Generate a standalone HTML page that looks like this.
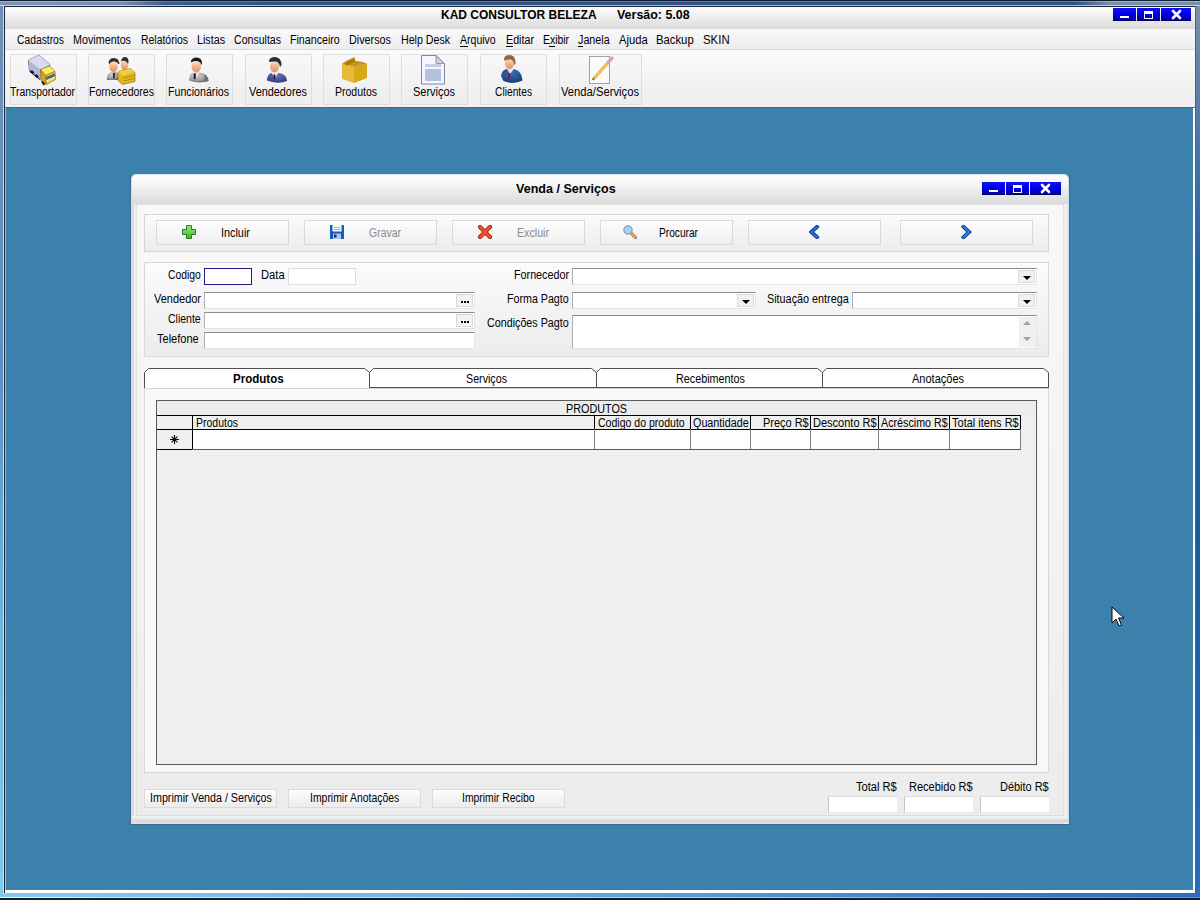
<!DOCTYPE html>
<html><head><meta charset="utf-8"><style>
html,body{margin:0;padding:0;width:1200px;height:900px;overflow:hidden;background:#0f1d2d}
body>div,body>svg{position:absolute}
body>div{box-sizing:border-box}
.t{white-space:nowrap;font-family:"Liberation Sans",sans-serif;line-height:normal}
</style></head><body>
<div style="left:0px;top:0px;width:1200px;height:900px;background:#0f1d2d"></div>
<div style="left:0px;top:1px;width:1200px;height:5px;background:linear-gradient(to right,#7c92b2 0px,#7890b0 120px,#3a5c92 165px,#2c5088 300px,#2c5088 1075px,#7890b0 1110px,#7890b0 1200px)"></div>
<div style="left:0px;top:1px;width:1200px;height:1px;background:linear-gradient(to right,#a0b4cc 0px,#a0b4cc 120px,#5a7cac 165px,#5a7cac 1075px,#a0b4cc 1110px)"></div>
<div style="left:0px;top:5px;width:1200px;height:1px;background:linear-gradient(to right,#c0d4e8 0px,#c0d4e8 120px,#a0c0e8 165px,#a0c0e8 1075px,#c0d4e8 1110px)"></div>
<div style="left:0px;top:6px;width:3px;height:888px;background:linear-gradient(to bottom,#7090b8 0%,#5c90c4 40%,#68b8e0 70%,#80c8f0 100%)"></div>
<div style="left:1196px;top:6px;width:4px;height:888px;background:linear-gradient(to bottom,#7890a8 0%,#2060a8 30%,#1a5aa0 60%,#2a6cc0 100%)"></div>
<div style="left:0px;top:893px;width:1200px;height:5px;background:linear-gradient(to right,#88c8ec 0%,#70b0e0 40%,#3a80c8 80%,#2a6cc0 100%)"></div>
<div style="left:0px;top:897px;width:1200px;height:1px;background:linear-gradient(to right,#e0f4ff 0%,#a8d0f0 60%,#5090d0 100%)"></div>
<div style="left:3px;top:5px;width:1px;height:889px;background:#c0e0f8"></div>
<div style="left:4px;top:6px;width:1192px;height:1px;background:#1c2838"></div>
<div style="left:4px;top:6px;width:1px;height:887px;background:#1c2838"></div>
<div style="left:1195px;top:6px;width:1px;height:887px;background:#4a6080"></div>
<div style="left:5px;top:7px;width:1190px;height:886px;background:#f0f0f0"></div>
<div style="left:5px;top:7px;width:1190px;height:22px;background:linear-gradient(to bottom,#fdfdfd 0%,#f0f0f0 40%,#dadada 100%)"></div>
<div style="left:1113px;top:8px;width:23px;height:13px;background:linear-gradient(to bottom,#1010ff 0%,#0000e8 50%,#0000a8 100%);border-bottom:1px solid #000060;box-sizing:border-box"></div>
<div style="left:1137px;top:8px;width:23px;height:13px;background:linear-gradient(to bottom,#1010ff 0%,#0000e8 50%,#0000a8 100%);border-bottom:1px solid #000060;box-sizing:border-box"></div>
<div style="left:1161px;top:8px;width:30px;height:13px;background:linear-gradient(to bottom,#1010ff 0%,#0000e8 50%,#0000a8 100%);border-bottom:1px solid #000060;box-sizing:border-box"></div>
<div style="left:1120px;top:16px;width:9px;height:2px;background:#fff"></div>
<div style="left:1144px;top:11px;width:9px;height:8px;border:1px solid #fff;border-top-width:3px;box-sizing:border-box"></div>
<svg style="position:absolute;left:1171px;top:9px" width="11" height="11" viewBox="0 0 11 11"><path d="M2 2L9 9M9 2L2 9" stroke="#fff" stroke-width="2.6" stroke-linecap="round"/></svg>
<div class="t" style="left:441.00px;top:8px;font-size:12px;color:#000;font-weight:bold;">KAD CONSULTOR BELEZA</div>
<div class="t" style="left:617.00px;top:8px;font-size:12px;color:#000;font-weight:bold;transform:scaleX(1.0373);transform-origin:0 0;">Versão: 5.08</div>
<div style="left:5px;top:29px;width:1190px;height:20px;background:linear-gradient(to bottom,#f9f9f9,#ededed)"></div>
<div style="left:5px;top:49px;width:1190px;height:1px;background:#d9d9d9"></div>
<div style="left:5px;top:50px;width:1190px;height:1px;background:#fbfbfb"></div>
<div class="t" style="left:17.00px;top:33px;font-size:12px;color:#000;transform:scaleX(0.8594);transform-origin:0 0;">Cadastros</div>
<div class="t" style="left:73.00px;top:33px;font-size:12px;color:#000;transform:scaleX(0.8966);transform-origin:0 0;">Movimentos</div>
<div class="t" style="left:141.00px;top:33px;font-size:12px;color:#000;transform:scaleX(0.8700);transform-origin:0 0;">Relatórios</div>
<div class="t" style="left:197.00px;top:33px;font-size:12px;color:#000;transform:scaleX(0.8932);transform-origin:0 0;">Listas</div>
<div class="t" style="left:234.00px;top:33px;font-size:12px;color:#000;transform:scaleX(0.8808);transform-origin:0 0;">Consultas</div>
<div class="t" style="left:290.00px;top:33px;font-size:12px;color:#000;transform:scaleX(0.8873);transform-origin:0 0;">Financeiro</div>
<div class="t" style="left:349.00px;top:33px;font-size:12px;color:#000;transform:scaleX(0.8998);transform-origin:0 0;">Diversos</div>
<div class="t" style="left:401.00px;top:33px;font-size:12px;color:#000;transform:scaleX(0.8873);transform-origin:0 0;">Help Desk</div>
<div class="t" style="left:460.00px;top:33px;font-size:12px;color:#000;transform:scaleX(0.8778);transform-origin:0 0;">Arquivo</div>
<div class="t" style="left:506.00px;top:33px;font-size:12px;color:#000;transform:scaleX(0.8931);transform-origin:0 0;">Editar</div>
<div class="t" style="left:543.00px;top:33px;font-size:12px;color:#000;transform:scaleX(0.8664);transform-origin:0 0;">Exibir</div>
<div class="t" style="left:578.00px;top:33px;font-size:12px;color:#000;transform:scaleX(0.8967);transform-origin:0 0;">Janela</div>
<div class="t" style="left:619.00px;top:33px;font-size:12px;color:#000;transform:scaleX(0.9350);transform-origin:0 0;">Ajuda</div>
<div class="t" style="left:656.00px;top:33px;font-size:12px;color:#000;transform:scaleX(0.9417);transform-origin:0 0;">Backup</div>
<div class="t" style="left:703.00px;top:33px;font-size:12px;color:#000;transform:scaleX(0.9509);transform-origin:0 0;">SKIN</div>
<div style="left:460px;top:46px;width:8px;height:1px;background:#000"></div>
<div style="left:506px;top:46px;width:7px;height:1px;background:#000"></div>
<div style="left:549px;top:46px;width:6px;height:1px;background:#000"></div>
<div style="left:578px;top:46px;width:5px;height:1px;background:#000"></div>
<div style="left:5px;top:51px;width:1190px;height:56px;background:linear-gradient(to bottom,#fbfbfb 0%,#f2f2f2 60%,#eeeeee 92%,#f6f0f0 94%,#f6f0f0 100%)"></div>
<div style="left:10px;top:54px;width:67px;height:51px;border:1px solid #dedede;background:linear-gradient(to bottom,#f8f8f8,#ededed);box-sizing:border-box"></div>
<div class="t" style="left:10.00px;top:85px;font-size:12px;color:#000;transform:scaleX(0.8675);transform-origin:0 0;">Transportador</div>
<div style="left:88px;top:54px;width:67px;height:51px;border:1px solid #dedede;background:linear-gradient(to bottom,#f8f8f8,#ededed);box-sizing:border-box"></div>
<div class="t" style="left:89.00px;top:85px;font-size:12px;color:#000;transform:scaleX(0.8779);transform-origin:0 0;">Fornecedores</div>
<div style="left:166px;top:54px;width:67px;height:51px;border:1px solid #dedede;background:linear-gradient(to bottom,#f8f8f8,#ededed);box-sizing:border-box"></div>
<div class="t" style="left:168.00px;top:85px;font-size:12px;color:#000;transform:scaleX(0.8879);transform-origin:0 0;">Funcionários</div>
<div style="left:245px;top:54px;width:67px;height:51px;border:1px solid #dedede;background:linear-gradient(to bottom,#f8f8f8,#ededed);box-sizing:border-box"></div>
<div class="t" style="left:249.00px;top:85px;font-size:12px;color:#000;transform:scaleX(0.9055);transform-origin:0 0;">Vendedores</div>
<div style="left:323px;top:54px;width:67px;height:51px;border:1px solid #dedede;background:linear-gradient(to bottom,#f8f8f8,#ededed);box-sizing:border-box"></div>
<div class="t" style="left:335.00px;top:85px;font-size:12px;color:#000;transform:scaleX(0.8745);transform-origin:0 0;">Produtos</div>
<div style="left:401px;top:54px;width:67px;height:51px;border:1px solid #dedede;background:linear-gradient(to bottom,#f8f8f8,#ededed);box-sizing:border-box"></div>
<div class="t" style="left:413.00px;top:85px;font-size:12px;color:#000;transform:scaleX(0.9128);transform-origin:0 0;">Serviços</div>
<div style="left:480px;top:54px;width:67px;height:51px;border:1px solid #dedede;background:linear-gradient(to bottom,#f8f8f8,#ededed);box-sizing:border-box"></div>
<div class="t" style="left:495.00px;top:85px;font-size:12px;color:#000;transform:scaleX(0.8534);transform-origin:0 0;">Clientes</div>
<div style="left:559px;top:54px;width:83px;height:51px;border:1px solid #dedede;background:linear-gradient(to bottom,#f8f8f8,#ededed);box-sizing:border-box"></div>
<div class="t" style="left:561.00px;top:85px;font-size:12px;color:#000;transform:scaleX(0.9354);transform-origin:0 0;">Venda/Serviços</div>
<div style="left:5px;top:107px;width:1190px;height:1px;background:#56626e"></div>
<div style="left:5px;top:108px;width:1px;height:782px;background:#a8b4c0"></div>
<div style="left:6px;top:108px;width:1187px;height:782px;background:#3c80ac"></div>
<div style="left:1193px;top:108px;width:2px;height:785px;background:#fff"></div>
<div style="left:5px;top:890px;width:1190px;height:3px;background:#fff"></div>
<div style="left:130px;top:174px;width:940px;height:651px;background:#3a6a8c;border-radius:6px 6px 0 0"></div>
<div style="left:131px;top:174px;width:938px;height:650px;background:#d0e4f6;border-radius:5px 5px 0 0"></div>
<div style="left:132px;top:204px;width:1px;height:620px;background:#d4dce8"></div>
<div style="left:133px;top:204px;width:1px;height:620px;background:#dcd8e4"></div>
<div style="left:134px;top:204px;width:2px;height:620px;background:#f4ecee"></div>
<div style="left:1064px;top:204px;width:2px;height:620px;background:#f4ecec"></div>
<div style="left:1066px;top:204px;width:1px;height:620px;background:#f0eef4"></div>
<div style="left:1067px;top:204px;width:1px;height:620px;background:#e0e4f0"></div>
<div style="left:132px;top:816px;width:936px;height:1px;background:#f0f0f0"></div>
<div style="left:132px;top:817px;width:936px;height:1px;background:#f0f0f4"></div>
<div style="left:132px;top:818px;width:936px;height:1px;background:#e8e8f0"></div>
<div style="left:132px;top:819px;width:936px;height:1px;background:#dcdce4"></div>
<div style="left:132px;top:820px;width:936px;height:2px;background:#d8dcd6"></div>
<div style="left:132px;top:822px;width:936px;height:1px;background:#e0d8dc"></div>
<div style="left:132px;top:175px;width:936px;height:29px;border-radius:4px 4px 0 0;background:linear-gradient(to bottom,#fefefe 0%,#f4f4f4 35%,#e4e4e4 75%,#dadada 100%)"></div>
<div style="left:136px;top:204px;width:928px;height:612px;background:#e2e0e0"></div>
<div style="left:137px;top:205px;width:926px;height:610px;background:linear-gradient(to bottom,#f8f8f8 0%,#f3f3f3 50%,#ececec 100%)"></div>
<div style="left:136px;top:815px;width:928px;height:1px;background:#dcdcdc"></div>
<div style="left:982px;top:182px;width:23px;height:13px;background:linear-gradient(to bottom,#1010ff 0%,#0000e8 50%,#0000a8 100%);border-bottom:1px solid #000060;box-sizing:border-box"></div>
<div style="left:1006px;top:182px;width:23px;height:13px;background:linear-gradient(to bottom,#1010ff 0%,#0000e8 50%,#0000a8 100%);border-bottom:1px solid #000060;box-sizing:border-box"></div>
<div style="left:1030px;top:182px;width:31px;height:13px;background:linear-gradient(to bottom,#1010ff 0%,#0000e8 50%,#0000a8 100%);border-bottom:1px solid #000060;box-sizing:border-box"></div>
<div style="left:989px;top:190px;width:9px;height:2px;background:#fff"></div>
<div style="left:1013px;top:185px;width:9px;height:8px;border:1px solid #fff;border-top-width:3px;box-sizing:border-box"></div>
<svg style="position:absolute;left:1040px;top:183px" width="11" height="11" viewBox="0 0 11 11"><path d="M2 2L9 9M9 2L2 9" stroke="#fff" stroke-width="2.6" stroke-linecap="round"/></svg>
<div class="t" style="left:516.00px;top:182px;font-size:12px;color:#000;font-weight:bold;transform:scaleX(1.0448);transform-origin:0 0;">Venda / Serviços</div>
<div style="left:144px;top:214px;width:905px;height:38px;border:1px solid #d6d6d6;background:linear-gradient(to bottom,#fafafa,#ececec);box-sizing:border-box"></div>
<div style="left:156px;top:220px;width:133px;height:25px;border:1px solid #d9d9d9;background:linear-gradient(to bottom,#fdfdfd,#efefef);box-sizing:border-box"></div>
<div style="left:304px;top:220px;width:133px;height:25px;border:1px solid #d9d9d9;background:linear-gradient(to bottom,#fdfdfd,#efefef);box-sizing:border-box"></div>
<div style="left:452px;top:220px;width:133px;height:25px;border:1px solid #d9d9d9;background:linear-gradient(to bottom,#fdfdfd,#efefef);box-sizing:border-box"></div>
<div style="left:600px;top:220px;width:133px;height:25px;border:1px solid #d9d9d9;background:linear-gradient(to bottom,#fdfdfd,#efefef);box-sizing:border-box"></div>
<div style="left:748px;top:220px;width:133px;height:25px;border:1px solid #d9d9d9;background:linear-gradient(to bottom,#fdfdfd,#efefef);box-sizing:border-box"></div>
<div style="left:900px;top:220px;width:133px;height:25px;border:1px solid #d9d9d9;background:linear-gradient(to bottom,#fdfdfd,#efefef);box-sizing:border-box"></div>
<div class="t" style="left:221.10px;top:226px;font-size:12px;color:#000;transform:scaleX(0.9028);transform-origin:0 0;">Incluir</div>
<div class="t" style="left:369.00px;top:226px;font-size:12px;color:#8c8c8c;transform:scaleX(0.8725);transform-origin:0 0;">Gravar</div>
<div class="t" style="left:517.00px;top:226px;font-size:12px;color:#8c8c8c;transform:scaleX(0.8886);transform-origin:0 0;">Excluir</div>
<div class="t" style="left:659.00px;top:226px;font-size:12px;color:#000;transform:scaleX(0.8475);transform-origin:0 0;">Procurar</div>
<div style="left:144px;top:262px;width:905px;height:95px;border:1px solid #d8d8d8;background:linear-gradient(to bottom,#fbfbfb,#ececec);box-sizing:border-box"></div>
<div class="t" style="left:168.00px;top:268px;font-size:12px;color:#000;transform:scaleX(0.8604);transform-origin:0 0;">Codigo</div>
<div style="left:204px;top:268px;width:48px;height:17px;border:1px solid #1c1c8c;background:#fff;box-sizing:border-box"></div>
<div class="t" style="left:261.00px;top:268px;font-size:12px;color:#000;transform:scaleX(0.9348);transform-origin:0 0;">Data</div>
<div style="left:288px;top:268px;width:68px;height:17px;border:1px solid #dcdcdc;background:#fff;box-sizing:border-box"></div>
<div class="t" style="left:154.00px;top:292px;font-size:12px;color:#000;transform:scaleX(0.9147);transform-origin:0 0;">Vendedor</div>
<div style="left:204px;top:292px;width:271px;height:17px;border:1px solid #e4e4e4;border-top-color:#8c8c8c;border-left-color:#b0b0b0;background:#fff;box-sizing:border-box"></div>
<div class="t" style="left:168.00px;top:312px;font-size:12px;color:#000;transform:scaleX(0.8758);transform-origin:0 0;">Cliente</div>
<div style="left:204px;top:312px;width:271px;height:17px;border:1px solid #e4e4e4;border-top-color:#8c8c8c;border-left-color:#b0b0b0;background:#fff;box-sizing:border-box"></div>
<div class="t" style="left:157.00px;top:332px;font-size:12px;color:#000;transform:scaleX(0.9191);transform-origin:0 0;">Telefone</div>
<div style="left:204px;top:332px;width:271px;height:17px;border:1px solid #e4e4e4;border-top-color:#8c8c8c;border-left-color:#b0b0b0;background:#fff;box-sizing:border-box"></div>
<div style="left:456px;top:294px;width:17px;height:13px;border:1px solid #dadada;background:#f2f2f2;box-sizing:border-box"></div>
<div style="left:461px;top:301px;width:8px;height:2px;background:repeating-linear-gradient(to right,#000 0 2px,transparent 2px 3px)"></div>
<div style="left:456px;top:314px;width:17px;height:13px;border:1px solid #dadada;background:#f2f2f2;box-sizing:border-box"></div>
<div style="left:461px;top:321px;width:8px;height:2px;background:repeating-linear-gradient(to right,#000 0 2px,transparent 2px 3px)"></div>
<div class="t" style="left:514.00px;top:268px;font-size:12px;color:#000;transform:scaleX(0.8962);transform-origin:0 0;">Fornecedor</div>
<div style="left:572px;top:268px;width:465px;height:17px;border:1px solid #e4e4e4;border-top-color:#8c8c8c;border-left-color:#b0b0b0;background:#fff;box-sizing:border-box"></div>
<div class="t" style="left:507.00px;top:292px;font-size:12px;color:#000;transform:scaleX(0.8897);transform-origin:0 0;">Forma Pagto</div>
<div style="left:572px;top:292px;width:184px;height:17px;border:1px solid #e4e4e4;border-top-color:#8c8c8c;border-left-color:#b0b0b0;background:#fff;box-sizing:border-box"></div>
<div class="t" style="left:767.00px;top:292px;font-size:12px;color:#000;transform:scaleX(0.9005);transform-origin:0 0;">Situação entrega</div>
<div style="left:852px;top:292px;width:185px;height:17px;border:1px solid #e4e4e4;border-top-color:#8c8c8c;border-left-color:#b0b0b0;background:#fff;box-sizing:border-box"></div>
<div class="t" style="left:487.00px;top:316px;font-size:12px;color:#000;transform:scaleX(0.8940);transform-origin:0 0;">Condições Pagto</div>
<div style="left:572px;top:315px;width:465px;height:34px;border:1px solid #e4e4e4;border-top-color:#8c8c8c;border-left-color:#b0b0b0;background:#fff;box-sizing:border-box"></div>
<div style="left:1018px;top:270px;width:17px;height:13px;border:1px solid #dcdcdc;background:#f0f0f0;box-sizing:border-box"></div>
<div style="left:1023px;top:276px;width:0;height:0;border-left:4px solid transparent;border-right:4px solid transparent;border-top:4px solid #000"></div>
<div style="left:737px;top:294px;width:17px;height:13px;border:1px solid #dcdcdc;background:#f0f0f0;box-sizing:border-box"></div>
<div style="left:742px;top:300px;width:0;height:0;border-left:4px solid transparent;border-right:4px solid transparent;border-top:4px solid #000"></div>
<div style="left:1018px;top:294px;width:17px;height:13px;border:1px solid #dcdcdc;background:#f0f0f0;box-sizing:border-box"></div>
<div style="left:1023px;top:300px;width:0;height:0;border-left:4px solid transparent;border-right:4px solid transparent;border-top:4px solid #000"></div>
<div style="left:1019px;top:317px;width:17px;height:30px;background:#f0f0f0"></div>
<div style="left:1023px;top:321px;width:0;height:0;border-left:4px solid transparent;border-right:4px solid transparent;border-bottom:4px solid #a0a0a0"></div>
<div style="left:1023px;top:337px;width:0;height:0;border-left:4px solid transparent;border-right:4px solid transparent;border-top:4px solid #a0a0a0"></div>
<div style="left:144px;top:388px;width:905px;height:385px;border:1px solid #d8d8d8;border-top:none;background:#f8f8f8;box-sizing:border-box"></div>
<div style="left:144px;top:388px;width:905px;height:1px;background:#d4d4d4"></div>
<svg style="position:absolute;left:0;top:0" width="1200" height="900"><path d="M144.5 388V372.5L148.5 368.5H364.5L369.5 372.5V388" fill="#fff" stroke="#505050" stroke-width="1"/><path d="M369.5 387V372.5L373.5 368.5H591.5L596.5 372.5V387" fill="#fff" stroke="#505050" stroke-width="1"/><path d="M369 387.5H597" stroke="#505050" stroke-width="1"/><path d="M596.5 387V372.5L600.5 368.5H817.5L822.5 372.5V387" fill="#fff" stroke="#505050" stroke-width="1"/><path d="M596 387.5H823" stroke="#505050" stroke-width="1"/><path d="M822.5 387V372.5L826.5 368.5H1043.5L1048.5 372.5V387" fill="#fff" stroke="#505050" stroke-width="1"/><path d="M822 387.5H1049" stroke="#505050" stroke-width="1"/></svg>
<div class="t" style="left:233.00px;top:372px;font-size:12px;color:#000;font-weight:bold;transform:scaleX(0.9624);transform-origin:0 0;">Produtos</div>
<div class="t" style="left:466.00px;top:372px;font-size:12px;color:#000;transform:scaleX(0.8910);transform-origin:0 0;">Serviços</div>
<div class="t" style="left:676.00px;top:372px;font-size:12px;color:#000;transform:scaleX(0.8995);transform-origin:0 0;">Recebimentos</div>
<div class="t" style="left:912.00px;top:372px;font-size:12px;color:#000;transform:scaleX(0.9170);transform-origin:0 0;">Anotações</div>
<div style="left:156px;top:400px;width:881px;height:365px;border:1px solid #5a5a5a;background:#efefef;box-sizing:border-box"></div>
<div style="left:157px;top:401px;width:879px;height:14px;background:#ececec"></div>
<div class="t" style="left:566.00px;top:402px;font-size:12px;color:#000;transform:scaleX(0.8999);transform-origin:0 0;">PRODUTOS</div>
<div style="left:157px;top:415px;width:864px;height:1px;background:#000"></div>
<div style="left:157px;top:416px;width:864px;height:13px;background:#efefef"></div>
<div style="left:157px;top:429px;width:864px;height:1px;background:#000"></div>
<div style="left:192px;top:430px;width:829px;height:19px;background:#fff"></div>
<div style="left:157px;top:430px;width:35px;height:19px;background:#efefef"></div>
<div style="left:157px;top:449px;width:864px;height:1px;background:#5a5a5a"></div>
<div style="left:192px;top:415px;width:1px;height:14px;background:#000"></div>
<div style="left:192px;top:429px;width:1px;height:20px;background:#808080"></div>
<div style="left:594px;top:415px;width:1px;height:14px;background:#000"></div>
<div style="left:594px;top:429px;width:1px;height:20px;background:#808080"></div>
<div style="left:690px;top:415px;width:1px;height:14px;background:#000"></div>
<div style="left:690px;top:429px;width:1px;height:20px;background:#808080"></div>
<div style="left:750px;top:415px;width:1px;height:14px;background:#000"></div>
<div style="left:750px;top:429px;width:1px;height:20px;background:#808080"></div>
<div style="left:810px;top:415px;width:1px;height:14px;background:#000"></div>
<div style="left:810px;top:429px;width:1px;height:20px;background:#808080"></div>
<div style="left:878px;top:415px;width:1px;height:14px;background:#000"></div>
<div style="left:878px;top:429px;width:1px;height:20px;background:#808080"></div>
<div style="left:949px;top:415px;width:1px;height:14px;background:#000"></div>
<div style="left:949px;top:429px;width:1px;height:20px;background:#808080"></div>
<div style="left:1020px;top:415px;width:1px;height:14px;background:#000"></div>
<div style="left:1020px;top:429px;width:1px;height:20px;background:#808080"></div>
<div style="left:192px;top:429px;width:1px;height:20px;background:#000"></div>
<div class="t" style="left:196.00px;top:416px;font-size:12px;color:#000;transform:scaleX(0.8745);transform-origin:0 0;">Produtos</div>
<div class="t" style="left:598.00px;top:416px;font-size:12px;color:#000;transform:scaleX(0.8782);transform-origin:0 0;">Codigo do produto</div>
<div class="t" style="left:693.00px;top:416px;font-size:12px;color:#000;transform:scaleX(0.8978);transform-origin:0 0;">Quantidade</div>
<div class="t" style="left:763.00px;top:416px;font-size:12px;color:#000;transform:scaleX(0.9136);transform-origin:0 0;">Preço R$</div>
<div class="t" style="left:813.00px;top:416px;font-size:12px;color:#000;transform:scaleX(0.9183);transform-origin:0 0;">Desconto R$</div>
<div class="t" style="left:881.00px;top:416px;font-size:12px;color:#000;transform:scaleX(0.8932);transform-origin:0 0;">Acréscimo R$</div>
<div class="t" style="left:952.00px;top:416px;font-size:12px;color:#000;transform:scaleX(0.9174);transform-origin:0 0;">Total itens R$</div>
<svg style="position:absolute;left:169px;top:434px" width="12" height="12" viewBox="0 0 12 12"><path d="M5.5 1V10M1 5.5H10M2.6 2.6L8.4 8.4M8.4 2.6L2.6 8.4" stroke="#000" stroke-width="1.1"/><circle cx="5.5" cy="5.5" r="1.6" fill="#000"/></svg>
<div style="left:157px;top:449px;width:35px;height:1px;background:#000"></div>
<div style="left:144px;top:789px;width:133px;height:19px;border:1px solid #dadada;background:linear-gradient(to bottom,#fdfdfd,#ececec);box-sizing:border-box"></div>
<div class="t" style="left:150.11px;top:791px;font-size:12px;color:#000;transform:scaleX(0.8916);transform-origin:0 0;">Imprimir Venda / Serviços</div>
<div style="left:288px;top:789px;width:133px;height:19px;border:1px solid #dadada;background:linear-gradient(to bottom,#fdfdfd,#ececec);box-sizing:border-box"></div>
<div class="t" style="left:310.13px;top:791px;font-size:12px;color:#000;transform:scaleX(0.8694);transform-origin:0 0;">Imprimir Anotações</div>
<div style="left:432px;top:789px;width:133px;height:19px;border:1px solid #dadada;background:linear-gradient(to bottom,#fdfdfd,#ececec);box-sizing:border-box"></div>
<div class="t" style="left:462.14px;top:791px;font-size:12px;color:#000;transform:scaleX(0.8640);transform-origin:0 0;">Imprimir Recibo</div>
<div class="t" style="left:856.00px;top:780px;font-size:12px;color:#000;transform:scaleX(0.9245);transform-origin:0 0;">Total R$</div>
<div class="t" style="left:909.00px;top:780px;font-size:12px;color:#000;transform:scaleX(0.9182);transform-origin:0 0;">Recebido R$</div>
<div class="t" style="left:1000.00px;top:780px;font-size:12px;color:#000;transform:scaleX(0.9127);transform-origin:0 0;">Débito R$</div>
<div style="left:828px;top:796px;width:70px;height:17px;border:1px solid #ececec;border-left-color:#c4c4c4;border-top-color:#dcdcdc;background:#fff;box-sizing:border-box"></div>
<div style="left:904px;top:796px;width:70px;height:17px;border:1px solid #ececec;border-left-color:#c4c4c4;border-top-color:#dcdcdc;background:#fff;box-sizing:border-box"></div>
<div style="left:980px;top:796px;width:70px;height:17px;border:1px solid #ececec;border-left-color:#c4c4c4;border-top-color:#dcdcdc;background:#fff;box-sizing:border-box"></div>
<svg style="position:absolute;left:1111px;top:606px" width="14" height="22" viewBox="0 0 14 22"><path d="M1 1V17L5 13L8 20L10.5 19L7.5 12H13Z" fill="#fff" stroke="#000" stroke-width="1"/></svg><svg width="0" height="0" style="position:absolute"><defs>
<linearGradient id="face" x1="0" y1="0" x2="0" y2="1"><stop offset="0" stop-color="#fff0e0"/><stop offset="0.35" stop-color="#f4c09a"/><stop offset="1" stop-color="#e09068"/></linearGradient>
<radialGradient id="suitGray" cx="0.4" cy="0.3" r="0.8"><stop offset="0" stop-color="#d0d0d0"/><stop offset="0.6" stop-color="#a0a0a0"/><stop offset="1" stop-color="#606060"/></radialGradient>
<radialGradient id="suitBlue" cx="0.5" cy="0.3" r="0.8"><stop offset="0" stop-color="#6870b0"/><stop offset="0.7" stop-color="#40488a"/><stop offset="1" stop-color="#202860"/></radialGradient>
<radialGradient id="suitNavy" cx="0.5" cy="0.3" r="0.8"><stop offset="0" stop-color="#3a70b0"/><stop offset="0.7" stop-color="#1c4a86"/><stop offset="1" stop-color="#0c2a58"/></radialGradient>
<linearGradient id="boxY" x1="0" y1="0" x2="1" y2="1"><stop offset="0" stop-color="#f8d050"/><stop offset="1" stop-color="#d0a010"/></linearGradient>
</defs></svg>
<svg style="position:absolute;left:24px;top:52px" width="36" height="36" viewBox="0 0 36 36">
<path d="M4.2 8.2L15 3L25.8 12.4L25.8 15.5L16.2 18L16.2 27.8L5.6 19.6Z" fill="#a8a8c8" stroke="#585878" stroke-width="0.7"/>
<path d="M4.2 8.2L15 3L25.8 12.4L16.2 17.6Z" fill="#d8d8ee"/>
<path d="M4.6 9L16 17.8L16 27.5L5.8 19.4Z" fill="#b4b4d4"/>
<path d="M6 18.5L15.8 26.5L15.8 28L6 20Z" fill="#404058"/>
<path d="M7 19L9.5 21.2M11.5 23L14 25.2" stroke="#101018" stroke-width="2.4"/>
<path d="M16.5 17.5L25.8 14L31 19.5L21.5 23.5Z" fill="#f8ee60" stroke="#907818" stroke-width="0.6"/>
<path d="M16.5 17.5L21.5 23.5L22.5 32.5L17.5 29Z" fill="#d8a818" stroke="#806010" stroke-width="0.6"/>
<path d="M21.5 23.5L31 19.5L31.5 27.5L22.5 32.5Z" fill="#f0d048" stroke="#806010" stroke-width="0.6"/>
<path d="M22 25L30.8 21.2L30.9 24.2L22.3 28Z" fill="#506878"/>
<path d="M22.3 29L31 25.5" stroke="#fff8c0" stroke-width="1"/>
<path d="M18 29.5L20.5 32.8" stroke="#181818" stroke-width="2"/>
</svg>
<svg style="position:absolute;left:103px;top:54px" width="36" height="36" viewBox="0 0 36 36">
<path d="M4 26Q3 19 9 18L13 18Q16 19 16 26Z" fill="url(#suitGray)"/>
<path d="M10 19L12 19L11.5 25L10 24Z" fill="#302030"/>
<ellipse cx="10.5" cy="12.5" rx="4.3" ry="5.5" fill="url(#face)"/>
<path d="M5.5 9Q6 4 11 4Q16 4 16.5 10L15.5 10Q14 7 10 7.5Q7 8 6.5 10Z" fill="#303030"/>
<ellipse cx="21.5" cy="11" rx="3.8" ry="5" fill="url(#face)"/>
<path d="M18 8Q18.5 3 22 3Q26 3 25.5 9L24.8 9.5Q23 6 19 7Z" fill="#303030"/>
<path d="M18.5 16L25 15.5L24 18L19 18Z" fill="#503030"/>
<path d="M15 17.5L27 14.5L32 18.5L32 27.5L19.5 30.5L15 26.5Z" fill="#e0b820" stroke="#907010" stroke-width="0.7"/>
<path d="M15 17.5L27 14.5L32 18.5L19.5 21.5Z" fill="#f0d040"/>
<path d="M20 24L31 21.5M20 27L31 24.5" stroke="#a88010" stroke-width="0.8"/>
</svg>
<svg style="position:absolute;left:181px;top:54px" width="36" height="36" viewBox="0 0 36 36">
<path d="M8 26.5Q8 19.5 13 18.5L19 18.5Q27 19.5 27.5 27Q18 30 8 26.5Z" fill="url(#suitGray)"/>
<path d="M23 20Q27 22 27.5 27L24 28Z" fill="#707070"/>
<path d="M12 18.5L18.5 18.5L15.5 23Z" fill="#e8e8e8"/>
<path d="M13 19.5L15 19.5L14.3 25.5L12.5 24.5Z" fill="#101020"/>
<ellipse cx="15.2" cy="12.5" rx="4.8" ry="6" fill="url(#face)"/>
<path d="M10 7Q11 3.5 15.5 3.5Q21 3.5 21 9.5L20.5 11Q19 7 15 7Q11.5 7 10 8.5Z" fill="#1a1a1a"/>
</svg>
<svg style="position:absolute;left:259px;top:54px" width="36" height="36" viewBox="0 0 36 36">
<path d="M8 26.5Q8 20 13 19L20 19Q28 20.5 28 27Q18 30.5 8 26.5Z" fill="url(#suitBlue)"/>
<path d="M12.5 19L19.5 19L16 24Z" fill="#e8e8f0"/>
<path d="M14.5 20.5L16.5 20.5L16 25.5L14.8 25Z" fill="#101020"/>
<ellipse cx="15.5" cy="12.5" rx="4.5" ry="6" fill="url(#face)"/>
<path d="M10 6.5Q11 3 16 3Q22.5 3.5 22.5 11L21 13Q20 7 15.5 7.5Q12 7.5 10.5 8Z" fill="#2c2c2c"/>
</svg>
<svg style="position:absolute;left:337px;top:52px" width="36" height="36" viewBox="0 0 36 36">
<path d="M5 11.5L17 15L17 31L5 27Z" fill="#e8b838"/>
<path d="M17 15L30 11.5L30 26L17 31Z" fill="#d8a818"/>
<path d="M5 11.5L11 8L17.5 5L18.5 9L24 9.5L30 11.5L17 15Z" fill="#c89020"/>
<path d="M7 12L17 6.5L17.5 9.5L10 13.5Z" fill="#b07810"/>
</svg>
<svg style="position:absolute;left:415px;top:52px" width="36" height="36" viewBox="0 0 36 36">
<path d="M6.5 3.5H21L29.5 11.5V32H6.5Z" fill="#f4f6ff" stroke="#8088a0" stroke-width="1"/>
<path d="M21 3.5V11.5H29.5Z" fill="#c8d0e4" stroke="#8088a0" stroke-width="0.8"/>
<rect x="10" y="12" width="16" height="3" fill="#c8cce0"/>
<rect x="10" y="17" width="16" height="12" fill="#b4c0e0"/>
</svg>
<svg style="position:absolute;left:494px;top:52px" width="36" height="36" viewBox="0 0 36 36">
<path d="M7 24Q7.5 18 13 17L20 17Q28 19 28.5 28.5Q19 33 9.5 29Z" fill="url(#suitNavy)"/>
<path d="M13 17L20 17L16 22Z" fill="#e0e8f0"/>
<path d="M14 21L16.5 21L16 27L14 26.5Z" fill="#8a1a40"/>
<ellipse cx="15.5" cy="11.5" rx="4.5" ry="5.5" fill="url(#face)"/>
<path d="M10 7Q10.5 3 15.5 3Q22 3 21.5 12L20 13Q20 7.5 15.5 7.5Q12 7.5 10.5 9Z" fill="#8a6a48"/>
</svg>
<svg style="position:absolute;left:583px;top:52px" width="36" height="36" viewBox="0 0 36 36">
<rect x="6.5" y="4.5" width="20" height="27" fill="#fafafa" stroke="#a0a0a0" stroke-width="1"/>
<path d="M10.5 27L26.5 9" stroke="#e8a838" stroke-width="3.2"/>
<path d="M11 26.5L26 9.5" stroke="#f8d070" stroke-width="1.2"/>
<path d="M25.5 10L29 6" stroke="#c8a8a0" stroke-width="3.4" stroke-linecap="round"/>
<path d="M9.5 28L11 26" stroke="#806040" stroke-width="1.5"/>
</svg>
<svg style="position:absolute;left:182px;top:225px" width="14" height="14" viewBox="0 0 14 14">
<defs><linearGradient id="gp" x1="0" y1="0" x2="0" y2="1"><stop offset="0" stop-color="#90f070"/><stop offset="1" stop-color="#40b030"/></linearGradient></defs>
<path d="M4.5 0.5H9.5V4.5H13.5V9.5H9.5V13.5H4.5V9.5H0.5V4.5H4.5Z" fill="url(#gp)" stroke="#208020" stroke-width="1"/>
</svg>
<svg style="position:absolute;left:330px;top:225px" width="14" height="14" viewBox="0 0 14 14">
<rect x="0" y="0" width="14" height="14" rx="0.5" fill="#1a5cb0"/>
<rect x="2.5" y="0" width="9" height="6.5" fill="#f4f8ff"/>
<path d="M4 2.5H10M4 4.5H10" stroke="#8090b0" stroke-width="0.7"/>
<rect x="3" y="8.5" width="8" height="5.5" fill="#a8c8f0"/>
<rect x="4" y="9.5" width="2.5" height="3" fill="#103070"/>
</svg>
<svg style="position:absolute;left:478px;top:225px" width="14" height="14" viewBox="0 0 14 14">
<path d="M2 2L12 12M12 2L2 12" stroke="#902010" stroke-width="4.2" stroke-linecap="round"/>
<path d="M2 2L12 12M12 2L2 12" stroke="#f05030" stroke-width="2.6" stroke-linecap="round"/>
</svg>
<svg style="position:absolute;left:623px;top:225px" width="14" height="14" viewBox="0 0 14 14">
<path d="M7 7L12.5 12.5" stroke="#a06020" stroke-width="3" stroke-linecap="round"/>
<path d="M7 7L12.5 12.5" stroke="#f0c070" stroke-width="1.4" stroke-linecap="round"/>
<circle cx="5" cy="5" r="4.2" fill="#a8d0f0" stroke="#7090a8" stroke-width="1"/>
</svg>
<svg style="position:absolute;left:809px;top:225px" width="11" height="14" viewBox="0 0 11 14">
<path d="M8 1.8L2.3 7L8 12.2" fill="none" stroke="#0a3890" stroke-width="3.8" stroke-linecap="square" stroke-linejoin="miter"/>
<path d="M8 1.8L2.3 7L8 12.2" fill="none" stroke="#2a74e0" stroke-width="2" stroke-linecap="square"/>
</svg>
<svg style="position:absolute;left:961px;top:225px" width="11" height="14" viewBox="0 0 11 14">
<path d="M2.5 1.8L8.2 7L2.5 12.2" fill="none" stroke="#0a3890" stroke-width="3.8" stroke-linecap="square"/>
<path d="M2.5 1.8L8.2 7L2.5 12.2" fill="none" stroke="#3080ea" stroke-width="2" stroke-linecap="square"/>
</svg>
</body></html>
